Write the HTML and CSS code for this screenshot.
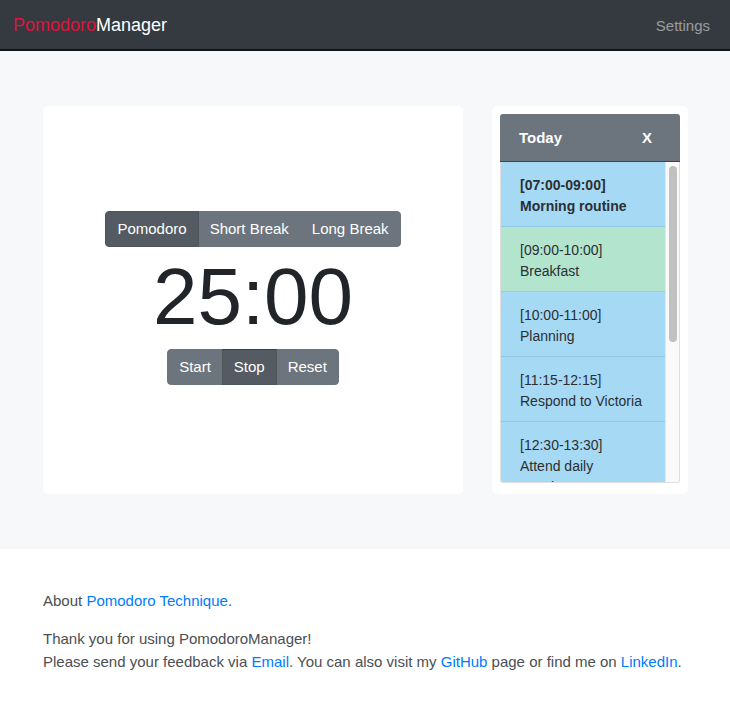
FILE: index.html
```html
<!DOCTYPE html>
<html lang="en">
<head>
<meta charset="utf-8">
<title>PomodoroManager</title>
<link rel="stylesheet" href="styles.css">
</head>
<body>
<nav class="navbar">
  <a class="brand" href="#"><span class="brand-red">Pomodoro</span>Manager</a>
  <a class="nav-link" href="#">Settings</a>
</nav>
<main class="main">
  <section class="card timer-card">
    <div class="btn-group">
      <button class="btn active">Pomodoro</button>
      <button class="btn">Short Break</button>
      <button class="btn">Long Break</button>
    </div>
    <div class="timer">25:00</div>
    <div class="btn-group">
      <button class="btn">Start</button>
      <button class="btn active focus">Stop</button>
      <button class="btn">Reset</button>
    </div>
  </section>
  <aside class="card today-card">
    <div class="today-header">
      <span>Today</span>
      <span class="close">X</span>
    </div>
    <div class="today-body">
      <ul class="today-list">
        <li class="item blue current"><div>[07:00-09:00]</div><div>Morning routine</div></li>
        <li class="item green"><div>[09:00-10:00]</div><div>Breakfast</div></li>
        <li class="item blue"><div>[10:00-11:00]</div><div>Planning</div></li>
        <li class="item blue"><div>[11:15-12:15]</div><div>Respond to Victoria</div></li>
        <li class="item blue"><div>[12:30-13:30]</div><div>Attend daily meeting</div></li>
        <li class="item green"><div>[13:30-14:30]</div><div>Lunch</div></li>
        <li class="item blue"><div>[14:30-16:00]</div><div>Code review</div></li>
        <li class="item blue"><div>[16:00-17:00]</div><div>Write report</div></li>
      </ul>
      <div class="scrollbar"><div class="thumb"></div></div>
    </div>
  </aside>
</main>
<footer class="footer">
  <p>About <a href="#">Pomodoro Technique</a>.</p>
  <p>Thank you for using PomodoroManager!<br>Please send your feedback via <a href="#">Email</a>. You can also visit my <a href="#">GitHub</a> page or find me on <a href="#">LinkedIn</a>.</p>
</footer>
</body>
</html>
```
FILE: styles.css
```css
* { box-sizing: border-box; }
html, body { margin: 0; padding: 0; }
body {
  font-family: "Liberation Sans", Arial, sans-serif;
  color: #212529;
  background: #fff;
}
a { text-decoration: none; }

.navbar {
  height: 51px;
  background: #343a40;
  border-bottom: 2px solid #111417;
  display: flex;
  align-items: center;
  justify-content: space-between;
  padding: 2px 20px 0 13px;
}
.brand { font-size: 18px; color: #fff; }
.brand-red { color: #dc143c; }
.nav-link { font-size: 15px; color: rgba(255,255,255,.5); }

.main {
  background: #f7f8fa;
  padding: 55px 42px 55px 43px;
  display: grid;
  grid-template-columns: 420px 1fr;
  column-gap: 29px;
}
.card {
  background: #fff;
  border-radius: 5px;
}
.timer-card {
  display: flex;
  flex-direction: column;
  align-items: center;
  justify-content: center;
  padding-bottom: 5px;
}
.btn-group { display: flex; }
.btn {
  font-family: "Liberation Sans", Arial, sans-serif;
  font-size: 15px;
  line-height: 24px;
  height: 36px;
  padding: 5px 11px;
  color: #fff;
  background: #6c757d;
  border: 1px solid #6c757d;
  border-radius: 0;
  margin: 0;
}
.btn + .btn { margin-left: -1px; }
.btn:first-child { border-radius: 4px 0 0 4px; }
.btn:last-child { border-radius: 0 4px 4px 0; }
.btn.active { background: #545b62; border-color: #4e555b; position: relative; }
.btn.focus { border-top-color: #3b4147; }
.timer {
  font-size: 80px;
  line-height: 96px;
  margin: 2px 0 4px;
  color: #212529;
}

.today-card {
  padding: 8px 8px 11px 8px;
  display: flex;
  flex-direction: column;
}
.today-header {
  height: 48px;
  background: #6c757d;
  color: #fff;
  font-weight: bold;
  font-size: 15px;
  display: flex;
  align-items: center;
  justify-content: space-between;
  padding: 0 28px 0 19px;
  border-radius: 3px 3px 0 0;
  border-bottom: 1px solid #3d4349;
}
.today-body {
  display: flex;
  height: 321px;
  border: 1px solid #dedede;
  border-top: none;
  border-radius: 0 0 3px 3px;
  overflow: hidden;
}
.today-list {
  list-style: none;
  margin: 0;
  padding: 0;
  flex: 1;
  overflow: hidden;
}
.scrollbar {
  width: 14px;
  background: #fafafa;
  border-left: 1px solid #e6e6e6;
  padding: 4px 2px 0 3px;
}
.thumb {
  height: 176px;
  background: #c1c1c1;
  border-radius: 5px;
}
.item {
  padding: 13px 19px 9px;
  font-size: 14px;
  line-height: 21px;
  color: #2b2f33;
  border-bottom: 1px solid #8fc8e4;
}
.item.blue { background: #a6d9f4; }
.item.green { background: #b3e4cd; border-bottom-color: #9fd3b9; }
.item.current { font-weight: bold; }

.footer {
  padding: 40px 43px 20px;
  font-size: 15px;
  line-height: 23px;
  color: #4a4f54;
}
.footer p { margin: 0 0 15px; }
.footer a { color: #007bff; }
```
